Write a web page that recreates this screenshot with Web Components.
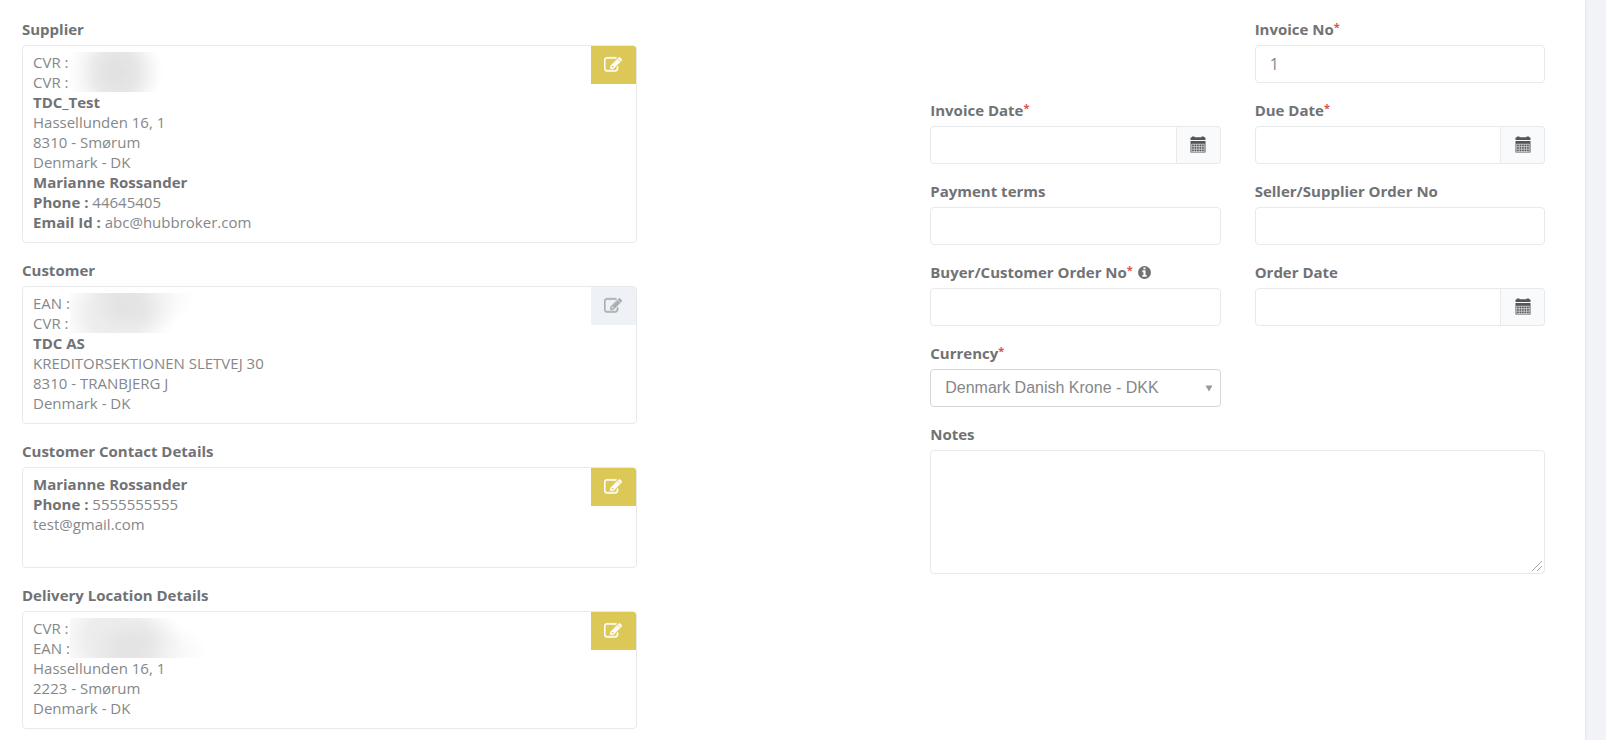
<!DOCTYPE html>
<html lang="en">
<head>
<meta charset="utf-8">
<title>Invoice</title>
<style>
  html, body {
    height: 100%;
  }
  body {
    margin: 0;
    background: #f1f3f8;
    color: #85878a;
    font: 15px/20px "Open Sans", "Noto Sans", sans-serif;
  }
  p {
    margin: 0;
  }
  b {
    color: #707275;
  }
  .wide {
    grid-column: 1 / -1;
  }
  .second {
    grid-column: 2;
  }
</style>
</head>
<body>

<invoice-form>
  <detail-card slot="parties" heading="Supplier">
    <masked-rows style="--mask-width: 96px; --mask-peak: 46%; --mask-tail: 50%">
      <p>CVR :</p>
      <p>CVR :</p>
    </masked-rows>
    <p><b>TDC_Test</b></p>
    <p>Hassellunden 16, 1</p>
    <p>8310 - Smørum</p>
    <p>Denmark - DK</p>
    <p><b>Marianne Rossander</b></p>
    <p><b>Phone :</b> 44645405</p>
    <p><b>Email Id :</b> abc@hubbroker.com</p>
  </detail-card>

  <detail-card slot="parties" heading="Customer" locked>
    <masked-rows style="--mask-width: 124px; --mask-peak: 38%; --mask-tail: 10%">
      <p>EAN :</p>
      <p>CVR :</p>
    </masked-rows>
    <p><b>TDC AS</b></p>
    <p>KREDITORSEKTIONEN SLETVEJ 30</p>
    <p>8310 - TRANBJERG J</p>
    <p>Denmark - DK</p>
  </detail-card>

  <detail-card slot="parties" heading="Customer Contact Details">
    <p><b>Marianne Rossander</b></p>
    <p><b>Phone :</b> 5555555555</p>
    <p>test@gmail.com</p>
  </detail-card>

  <detail-card slot="parties" heading="Delivery Location Details">
    <masked-rows style="--mask-width: 138px; --mask-peak: 34%; --mask-tail: 90%">
      <p>CVR :</p>
      <p>EAN :</p>
    </masked-rows>
    <p>Hassellunden 16, 1</p>
    <p>2223 - Smørum</p>
    <p>Denmark - DK</p>
  </detail-card>

  <text-field slot="fields" class="second" label="Invoice No" value="1" required></text-field>
  <date-field slot="fields" label="Invoice Date" required></date-field>
  <date-field slot="fields" label="Due Date" required></date-field>
  <text-field slot="fields" label="Payment terms"></text-field>
  <text-field slot="fields" label="Seller/Supplier Order No"></text-field>
  <text-field slot="fields" label="Buyer/Customer Order No" required info></text-field>
  <date-field slot="fields" label="Order Date"></date-field>
  <select-field slot="fields" label="Currency" value="Denmark Danish Krone - DKK" required></select-field>
  <notes-field slot="fields" class="wide" label="Notes"></notes-field>
</invoice-form>

<script>
const icons = {
  edit: `<svg viewBox="0 0 1792 1792" width="18" height="18" fill="currentColor" stroke="currentColor" stroke-width="50" aria-hidden="true"><path d="M888 1184l116-116-152-152-116 116v56h96v96h56zm440-720q-16-16-33 1l-350 350q-17 17-1 33t33-1l350-350q17-17 1-33zm80 594v190q0 119-84.5 203.5t-203.5 84.5h-832q-119 0-203.5-84.5t-84.5-203.5v-832q0-119 84.5-203.5t203.5-84.5h832q63 0 117 25 15 7 18 23 3 17-9 29l-49 49q-14 14-32 8-23-6-45-6h-832q-66 0-113 47t-47 113v832q0 66 47 113t113 47h832q66 0 113-47t47-113v-126q0-13 9-22l64-64q15-15 35-7t20 29zm-96-738l288 288-672 672h-288v-288zm444 132l-92 92-288-288 92-92q28-28 68-28t68 28l152 152q28 28 28 68t-28 68z"/></svg>`,
  info: `<svg viewBox="0 0 1792 1792" width="15" height="15" fill="currentColor" role="img" aria-label="Info"><path d="M1152 1376v-160q0-14-9-23t-23-9h-96v-512q0-14-9-23t-23-9h-320q-14 0-23 9t-9 23v160q0 14 9 23t23 9h96v320h-96q-14 0-23 9t-9 23v160q0 14 9 23t23 9h448q14 0 23-9t9-23zm-128-896v-160q0-14-9-23t-23-9h-192q-14 0-23 9t-9 23v160q0 14 9 23t23 9h192q14 0 23-9t9-23zm640 416q0 209-103 385.5t-279.5 279.5-385.5 103-385.5-103-279.5-279.5-103-385.5 103-385.5 279.5-279.5 385.5-103 385.5 103 279.5 279.5 103 385.5z"/></svg>`,
  calendar: `<svg viewBox="0 0 16 18" width="16" height="18" aria-hidden="true">
    <path fill="#555" d="M0.5 4V2.2Q0.5 1.2 1.5 1.2H2V0.5H4.5V1.2H11.5V0.5H14V1.2H14.5Q15.5 1.2 15.5 2.2V4zM0.5 5H15.5V16.5H0.5z"/>
    <path stroke="#f9fafc" stroke-width="0.6" d="M1.5 8.2H14.5M1.5 10.7H14.5M1.5 13.2H14.5M1.5 15.5H14.5M1.7 8V15.5M4.2 8V15.5M6.7 8V15.5M9.2 8V15.5M11.7 8V15.5M14.2 8V15.5"/>
  </svg>`
};

const fieldStyle = `
  * {
    box-sizing: border-box;
  }
  :host {
    display: block;
    min-width: 0;
  }
  label {
    display: block;
    height: 20px;
    margin-bottom: 6px;
    color: #707275;
    font-weight: bold;
  }
  label sup {
    color: #d9534f;
    font-size: 11px;
    line-height: 0;
    vertical-align: 4px;
  }
  label svg {
    vertical-align: -2px;
  }
  input, select, textarea {
    display: block;
    width: 100%;
    height: 38px;
    margin: 0;
    padding: 6px 14px;
    border: 1px solid #e8e9eb;
    border-radius: 4px;
    background: #fff;
    color: inherit;
    font: inherit;
    font-size: 16px;
    outline: none;
  }
`;

class InvoiceForm extends HTMLElement {
  constructor() {
    super();
    this.attachShadow({ mode: 'open' }).innerHTML = `
      <style>
        :host {
          display: block;
          min-height: 100%;
          box-sizing: border-box;
          margin-right: 21px;
          padding: 19px 40px 10px 22px;
          background: #fff;
          box-shadow: 1px 0 2px #e4e6ea;
        }
        form {
          display: grid;
          grid-template-columns: repeat(12, minmax(0, 1fr));
          column-gap: 34px;
          align-items: start;
        }
        .parties {
          grid-column: 1 / span 5;
          display: grid;
          gap: 17px;
        }
        .fields {
          grid-column: 8 / span 5;
          display: grid;
          grid-template-columns: 1fr 1fr;
          gap: 17px 34px;
        }
      </style>
      <form>
        <div class="parties"><slot name="parties"></slot></div>
        <div class="fields"><slot name="fields"></slot></div>
      </form>
    `;
  }
}

class DetailCard extends HTMLElement {
  constructor() {
    super();
    this.attachShadow({ mode: 'open' }).innerHTML = `
      <style>
        * {
          box-sizing: border-box;
        }
        :host {
          display: block;
        }
        h2 {
          margin: 0 0 6px;
          color: #707275;
          font: inherit;
          font-weight: bold;
        }
        .box {
          display: flex;
          align-items: flex-start;
          min-height: 101px;
          border: 1px solid #e8e9eb;
          border-radius: 4px;
        }
        .text {
          flex: 1;
          min-width: 0;
          padding: 6px 10px 10px;
        }
        button {
          display: flex;
          align-items: center;
          justify-content: center;
          width: 45px;
          height: 38px;
          padding: 0;
          border: 0;
          border-radius: 0 3px 0 0;
          background: #dcc857;
          color: #fff;
        }
        button:disabled {
          background: #eef1f5;
          color: #a9abae;
        }
      </style>
      <h2></h2>
      <div class="box">
        <div class="text"><slot></slot></div>
        <button type="button">${icons.edit}</button>
      </div>
    `;
    this.$heading = this.shadowRoot.querySelector('h2');
    this.$button = this.shadowRoot.querySelector('button');
  }

  connectedCallback() {
    const heading = this.getAttribute('heading');
    this.$heading.textContent = heading;
    this.$button.setAttribute('aria-label', 'Edit ' + heading);
    this.$button.disabled = this.hasAttribute('locked');
  }
}

// rows whose values are hidden behind one soft patch
class MaskedRows extends HTMLElement {
  constructor() {
    super();
    this.attachShadow({ mode: 'open' }).innerHTML = `
      <style>
        :host {
          display: flex;
        }
        .mask {
          width: var(--mask-width);
          background:
            radial-gradient(ellipse 48% 150% at var(--mask-peak) 50%, #00000016 0%, #00000012 45%, #00000005 80%, #00000000 100%),
            radial-gradient(ellipse 42% 90% at 58% var(--mask-tail), #0000000a 0%, #00000008 50%, #00000000 100%);
        }
      </style>
      <div><slot></slot></div>
      <div class="mask"></div>
    `;
  }
}

class BaseField extends HTMLElement {
  constructor() {
    super();
    this.attachShadow({ mode: 'open' }).innerHTML = `
      <style>${fieldStyle}</style>
      <label for="control"></label>
      ${this.control()}
    `;
    this.$label = this.shadowRoot.querySelector('label');
    this.$control = this.shadowRoot.querySelector('#control');
  }

  connectedCallback() {
    this.$label.textContent = this.getAttribute('label');
    if (this.hasAttribute('required')) {
      this.$label.insertAdjacentHTML('beforeend', '<sup>*</sup>');
      this.$control.required = true;
    }
    if (this.hasAttribute('info')) {
      this.$label.insertAdjacentHTML('beforeend', ' ' + icons.info);
    }
  }
}

class TextField extends BaseField {
  control() {
    return `<input id="control" type="text">`;
  }

  connectedCallback() {
    super.connectedCallback();
    this.$control.value = this.getAttribute('value') || '';
  }
}

class DateField extends BaseField {
  control() {
    return `
      <style>
        .group {
          display: flex;
        }
        .group input {
          flex: 1;
          min-width: 0;
          border-radius: 4px 0 0 4px;
        }
        .group button {
          display: flex;
          align-items: center;
          justify-content: center;
          width: 44px;
          padding: 0;
          border: 1px solid #e8e9eb;
          border-left: 0;
          border-radius: 0 4px 4px 0;
          background: #f9fafc;
        }
      </style>
      <div class="group">
        <input id="control" type="text">
        <button type="button" aria-label="Choose date">${icons.calendar}</button>
      </div>
    `;
  }
}

class SelectField extends BaseField {
  control() {
    return `
      <style>
        .group {
          display: grid;
          align-items: center;
        }
        .group > * {
          grid-area: 1 / 1;
        }
        select {
          appearance: none;
          border-color: #d5d6d8;
          font: 16px/20px "Liberation Sans", Arial, sans-serif;
        }
        .arrow {
          justify-self: end;
          margin-right: 8px;
          pointer-events: none;
        }
      </style>
      <div class="group">
        <select id="control"></select>
        <svg class="arrow" viewBox="0 0 8 7" width="8" height="7" fill="#999" aria-hidden="true"><path d="M0.5 0.5H7.5L4 6.5z"/></svg>
      </div>
    `;
  }

  connectedCallback() {
    super.connectedCallback();
    this.$control.add(new Option(this.getAttribute('value')));
  }
}

class NotesField extends BaseField {
  control() {
    return `
      <style>
        .group {
          display: grid;
        }
        .group > * {
          grid-area: 1 / 1;
        }
        textarea {
          height: 124px;
          resize: vertical;
        }
        textarea::-webkit-resizer {
          background: transparent;
        }
        .grip {
          place-self: end;
          margin: 2px;
          pointer-events: none;
        }
      </style>
      <div class="group">
        <textarea id="control"></textarea>
        <svg class="grip" viewBox="0 0 12 12" width="12" height="12" fill="none" stroke="#a5a5a5" aria-hidden="true"><path d="M1 11L11 1M6 11L11 6"/></svg>
      </div>
    `;
  }
}

customElements.define('invoice-form', InvoiceForm);
customElements.define('detail-card', DetailCard);
customElements.define('masked-rows', MaskedRows);
customElements.define('text-field', TextField);
customElements.define('date-field', DateField);
customElements.define('select-field', SelectField);
customElements.define('notes-field', NotesField);
</script>
</body>
</html>
